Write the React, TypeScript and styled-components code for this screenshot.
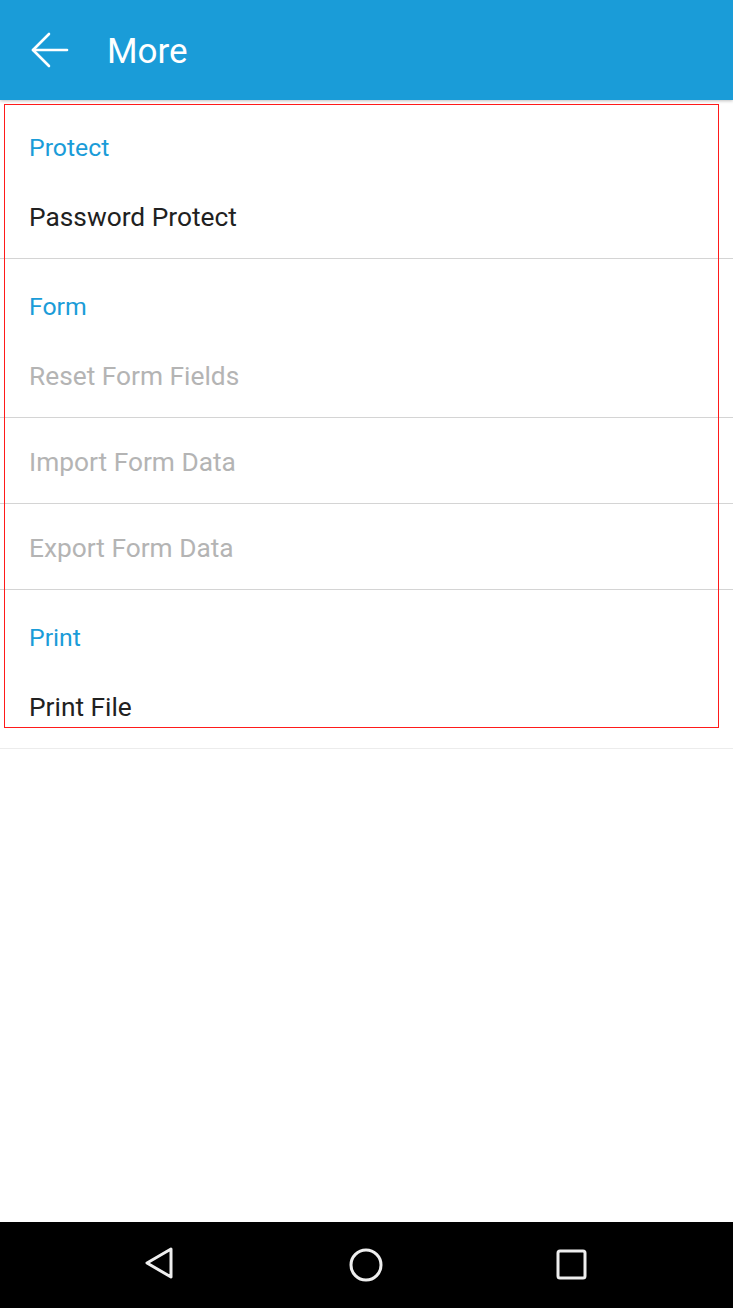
import React from "react";
import styled, { createGlobalStyle } from "styled-components";

const GlobalStyle = createGlobalStyle`
  html, body {
    margin: 0;
    padding: 0;
    background: #ffffff;
    font-family: Roboto, "Noto Sans", sans-serif;
  }
`

const Screen = styled.div`
  position: relative;
  width: 733px;
  height: 1308px;
  display: flex;
  flex-direction: column;
  background: #ffffff;
  overflow: hidden;
`

const AppBar = styled.header`
  height: 100px;
  flex: none;
  display: flex;
  align-items: center;
  background-color: #1a9cd8;
  box-shadow: 0 1px 3px rgba(0, 0, 0, 0.25);
  position: relative;
  z-index: 1;
`

const BackButton = styled.div`
  width: 107px;
  height: 100px;
  display: flex;
  align-items: center;
  padding-left: 31px;
  box-sizing: border-box;
`

const Title = styled.div`
  color: #ffffff;
  font-size: 35px;
  font-weight: 400;
  margin-top: 2px;
`

const Content = styled.main`
  flex: 1;
`

const SectionTitle = styled.div`
  height: 73px;
  box-sizing: border-box;
  padding: 33px 29px 0;
  font-size: 24.8px;
  line-height: 30px;
  color: #1a9cd8;
`

const Item = styled.div<{ $disabled?: boolean; $last?: boolean }>`
  height: 86px;
  box-sizing: border-box;
  display: flex;
  align-items: center;
  padding: 2px 29px 0;
  font-size: 26.3px;
  color: ${(p) => (p.$disabled ? "#b4b4b4" : "#212121")};
  border-bottom: 1px solid ${(p) => (p.$last ? "#ececec" : "#d4d4d4")};
`

const NavBar = styled.nav`
  height: 86px;
  flex: none;
  background: #000000;
  display: flex;
  align-items: center;
  padding-left: 57px;
`

const NavSlot = styled.div`
  width: 206px;
  display: flex;
  justify-content: center;
  align-items: center;
`

const Highlight = styled.div`
  position: absolute;
  left: 4px;
  top: 104px;
  width: 715px;
  height: 624px;
  border: 1.5px solid #ff1a1a;
  box-sizing: border-box;
  pointer-events: none;
`

type Entry = { label: string; disabled?: boolean };
type Section = { title: string; items: Entry[] };

const sections: Section[] = [
  { title: "Protect", items: [{ label: "Password Protect" }] },
  {
    title: "Form",
    items: [
      { label: "Reset Form Fields", disabled: true },
      { label: "Import Form Data", disabled: true },
      { label: "Export Form Data", disabled: true },
    ],
  },
  { title: "Print", items: [{ label: "Print File" }] },
];

export default function App() {
  return (
    <Screen>
      <GlobalStyle />
      <AppBar>
        <BackButton>
          <svg width="38" height="36" viewBox="0 0 38 36" fill="none" stroke="#ffffff" strokeWidth="2.6" strokeLinecap="round" strokeLinejoin="round">
            <path d="M2 18 H36" />
            <path d="M18 2 L2 18 L18 34" />
          </svg>
        </BackButton>
        <Title>More</Title>
      </AppBar>

      <Content>
        {sections.map((s, si) => (
          <section key={s.title}>
            <SectionTitle>{s.title}</SectionTitle>
            {s.items.map((it, i) => (
              <Item
                key={it.label}
                $disabled={it.disabled}
                $last={si === sections.length - 1 && i === s.items.length - 1}
              >
                {it.label}
              </Item>
            ))}
          </section>
        ))}
      </Content>

      <NavBar>
        <NavSlot>
          <svg width="34" height="38" viewBox="0 0 34 38" fill="none" stroke="#eeeeee" strokeWidth="3" strokeLinejoin="round">
            <path d="M28 3 L4 17 L28 31 Z" />
          </svg>
        </NavSlot>
        <NavSlot>
          <svg width="36" height="36" viewBox="0 0 36 36" fill="none" stroke="#eeeeee" strokeWidth="3">
            <circle cx="18" cy="18" r="15" />
          </svg>
        </NavSlot>
        <NavSlot>
          <svg width="32" height="32" viewBox="0 0 32 32" fill="none" stroke="#eeeeee" strokeWidth="3" strokeLinejoin="round">
            <rect x="2" y="2" width="27" height="27" rx="2" />
          </svg>
        </NavSlot>
      </NavBar>

      <Highlight />
    </Screen>
  );
}
